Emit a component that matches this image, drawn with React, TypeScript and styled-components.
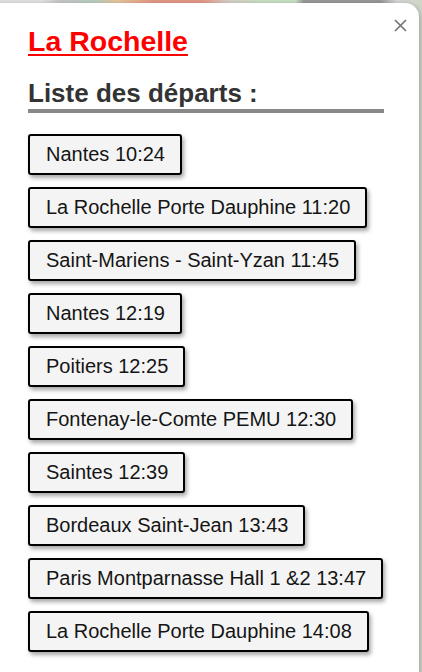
import React from "react";
import styled, { createGlobalStyle } from "styled-components";

const departures = [
  "Nantes 10:24",
  "La Rochelle Porte Dauphine 11:20",
  "Saint-Mariens - Saint-Yzan 11:45",
  "Nantes 12:19",
  "Poitiers 12:25",
  "Fontenay-le-Comte PEMU 12:30",
  "Saintes 12:39",
  "Bordeaux Saint-Jean 13:43",
  "Paris Montparnasse Hall 1 &2 13:47",
  "La Rochelle Porte Dauphine 14:08",
];

const GlobalStyle = createGlobalStyle`
  html, body {
    margin: 0;
    padding: 0;
    height: 100%;
    overflow: hidden;
  }
  body {
    font-family: "Liberation Sans", Arial, sans-serif;
    background: linear-gradient(90deg, #e4e4e4 0 10%, #c9c9c9 14%, #b8d0c4 22%, #e9c79a 28%, #e69a88 36% 48%, #d9d0c8 54%, #c9e2c4 62% 70%, #9a9a9a 72% 90%, #d8d8d8 94%, #cfd7c9 100%);
  }
`;

const MapView = styled.div`
  height: 100vh;
  padding-top: 3px;
  box-sizing: border-box;
`;

const Popup = styled.div`
  position: relative;
  margin-left: -13px;
  width: 432px;
  min-height: 700px;
  background: #fff;
  border-radius: 14px;
  box-shadow: 0 2px 6px rgba(0, 0, 0, 0.35);
  padding: 21px 0 0 41px;
  box-sizing: border-box;
`;

const CloseButton = styled.button`
  position: absolute;
  top: 13px;
  right: 9px;
  width: 19px;
  height: 19px;
  padding: 0;
  border: none;
  background: none;
  display: flex;
  align-items: center;
  justify-content: center;
  cursor: pointer;
`;

const Title = styled.a`
  display: inline-block;
  font-size: 28.5px;
  line-height: 34px;
  font-weight: bold;
  color: #ff0000;
  text-decoration: underline;
  text-decoration-thickness: 2px;
  text-underline-offset: 3px;
`;

const Heading = styled.h2`
  margin: 20px 0 21px;
  width: 356px;
  font-size: 26px;
  line-height: 30px;
  font-weight: bold;
  color: #333;
  padding-bottom: 1px;
  border-bottom: 4px solid #888;
`;

const List = styled.div`
  display: flex;
  flex-direction: column;
  align-items: flex-start;
  gap: 12px;
`;

const Departure = styled.button`
  font-family: "Liberation Sans", Arial, sans-serif;
  font-size: 20px;
  line-height: 21px;
  color: #151515;
  background: #f4f4f4;
  border: 2px solid #000;
  border-radius: 3px;
  padding: 8px 15px 8px 16px;
  box-shadow: 2px 3px 4px rgba(0, 0, 0, 0.35);
  cursor: pointer;
  white-space: nowrap;
`;

export default function App() {
  return (
    <>
      <GlobalStyle />
      <MapView>
        <Popup>
          <CloseButton aria-label="Fermer">
            <svg width="13" height="13" viewBox="0 0 13 13">
              <path d="M1 1 L12 12 M12 1 L1 12" stroke="#757575" strokeWidth="1.7" />
            </svg>
          </CloseButton>
          <Title href="#">La Rochelle</Title>
          <Heading>Liste des départs :</Heading>
          <List>
            {departures.map((d) => (
              <Departure key={d}>{d}</Departure>
            ))}
          </List>
        </Popup>
      </MapView>
    </>
  );
}
